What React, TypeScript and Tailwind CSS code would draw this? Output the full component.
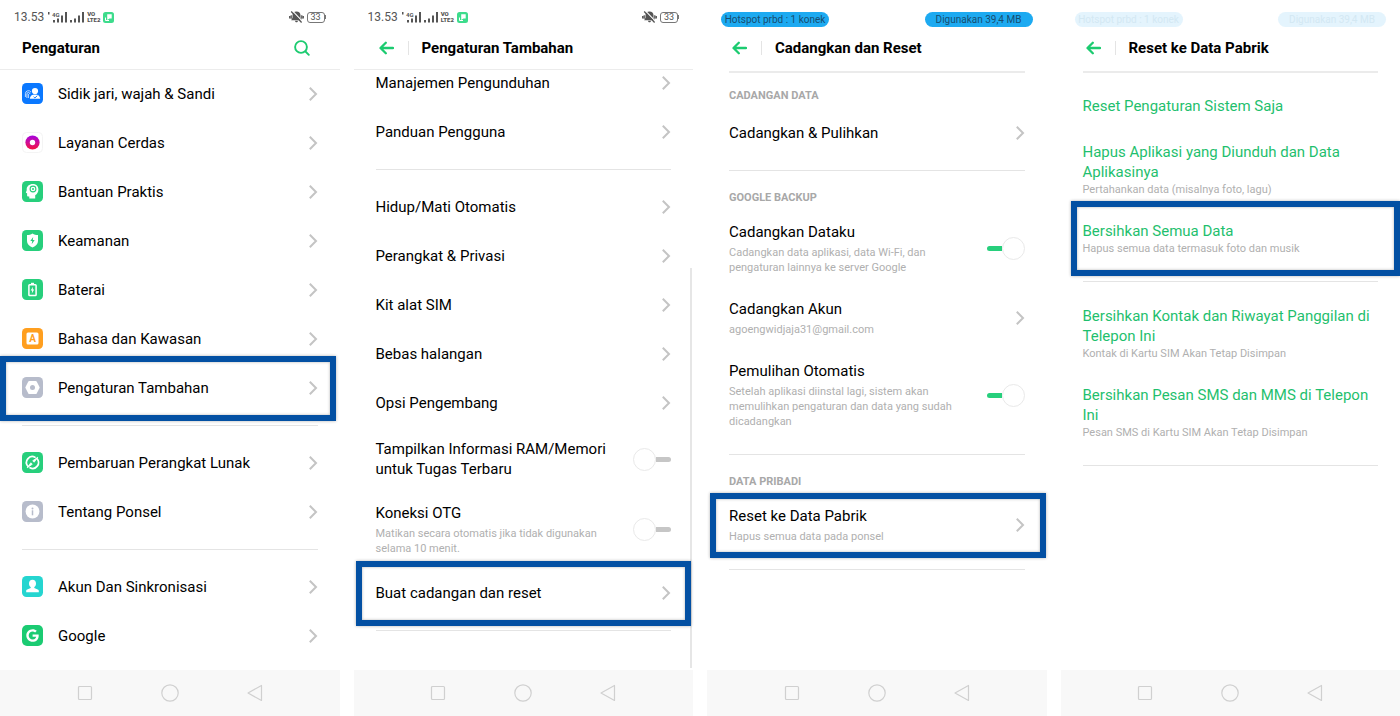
import { useId, useState, type ReactNode } from "react";
import { FaGoogle } from "react-icons/fa";

function Chevron() {
  return (
    <svg className="h-4 w-[9px] shrink-0" viewBox="0 0 9 16" fill="none" stroke="#c4c4c4" strokeWidth="2" aria-hidden="true">
      <path d="M.8 1.800 7 8 .8 14.200" />
    </svg>
  );
}

function BellOff() {
  return (
    <svg className="h-3 w-[15px]" viewBox="0 0 15 12" aria-hidden="true">
      <path d="M7.500.4C5 .4 3.500 2 3.500 4.300v2.400L2.200 9.200h10.600l-1.300-2.500V4.300c0-2.300-1.500-3.900-4-3.900Z" fill="#555" />
      <path d="M6 9.800h3c-.2 1-.8 1.500-1.500 1.500S6.200 10.800 6 9.800Z" fill="#555" />
      <path d="M3.600 0 14 10.800" stroke="#fff" strokeWidth="1.100" />
      <path d="M2.200.5 12.600 11.500M.7 5v2.400M14.300 5v2.400M2.200 4.200v3.500M12.800 4.200v3.500" stroke="#555" strokeWidth="1.300" />
    </svg>
  );
}

function Signal() {
  return (
    <svg className="h-3 w-[14px]" viewBox="0 0 14 12" fill="#555" aria-hidden="true">
      <path d="M0 9h2v2.500H0zM4 7.500h2v4H4zM8 4.500h2v7H8zM12 1h2v10.500h-2z" />
    </svg>
  );
}

function SignalLte() {
  return (
    <svg className="h-3 w-[19px]" viewBox="0 0 19 12" fill="#555" aria-hidden="true">
      <path d="M0 1h1.500v2.600H0zM5 9h2v2.500H5zM9 7.500h2v4H9zM13 4.500h2v7h-2zM17 1h2v10.500h-2z" />
      <text x="4" y="5.500" fontSize="6" fontWeight="700" fontFamily="Roboto, sans-serif">4G</text>
    </svg>
  );
}

function ClockStatus() {
  return (
    <div className="flex h-[34px] items-center px-3.5 text-[#555]">
      <span className="text-[12px] leading-4">13.53</span>
      <span className="ml-1 flex items-center gap-[3px]">
        <SignalLte />
        <Signal />
        <span className="flex flex-col text-[6px] font-black leading-[6px]">
          <span>VO</span>
          <span>LTE2</span>
        </span>
        <svg className="h-[11px] w-[11px]" viewBox="0 0 11 11" aria-hidden="true">
          <rect width="11" height="11" rx="2.500" fill="#3ddc8c" />
          <path d="M4.200 2.300h4.500v4.200H6.500L4.200 8Z" fill="#fff" />
          <path d="M2.500 5.500v3H6" stroke="#fff" strokeWidth="1" fill="none" />
        </svg>
      </span>
      <span className="ml-auto flex items-center gap-[3px]">
        <BellOff />
        <span className="flex items-center">
          <span className="flex h-[11px] w-[18px] items-center justify-center rounded-[3px] border border-[#777] text-[9px] leading-[9px]">33</span>
          <span className="h-1 w-px bg-[#777]" />
        </span>
      </span>
    </div>
  );
}

function PillStatus({ faded = false }: { faded?: boolean }) {
  const pill = faded ? "bg-[#e4f4fd] text-[#d3e8f3]" : "bg-[#1daaf1] text-[#174d70]";
  return (
    <div className="flex h-[34px] items-center justify-between px-3.5 pt-1 text-[10px] leading-[15px]">
      <span className={`w-[108px] whitespace-nowrap rounded-full text-center ${pill}`}>Hotspot prbd : 1 konek</span>
      <span className={`w-[108px] whitespace-nowrap rounded-full text-center ${pill}`}>Digunakan 39,4 MB</span>
    </div>
  );
}

function BackTitle({ children }: { children: ReactNode }) {
  return (
    <div className="flex h-7 items-center pl-[25px]">
      <button type="button" aria-label="Kembali">
        <svg className="h-[14px] w-[15px]" viewBox="0 0 15 14" fill="none" stroke="#1ccb70" strokeWidth="2.300" strokeLinecap="round" strokeLinejoin="round" aria-hidden="true">
          <path d="M14 7H2M6.800 1.800 1.500 7l5.300 5.200" />
        </svg>
      </button>
      <span className="ml-3.5 h-[14px] w-px bg-[#e4e4e4]" />
      <h1 className="ml-[13px] text-[15px] font-bold leading-5">{children}</h1>
    </div>
  );
}

function Divider() {
  return <hr className="mx-[22px] mb-3 mt-[13px] border-t border-[#e4e4e4]" />;
}

function Highlight({ place }: { place: string }) {
  return (
    <span
      className={`pointer-events-none absolute z-10 border-[6px] border-[#0350a3] shadow-[0_0_3px_rgba(0,0,0,0.3),inset_0_0_3px_rgba(0,0,0,0.3)] ${place}`}
    />
  );
}

function NavBar() {
  return (
    <nav className="flex h-[46px] items-center justify-center gap-[67px] bg-[#f8f8f8]">
      <button type="button" aria-label="Aplikasi terbaru">
        <svg className="h-[18px] w-[18px]" viewBox="0 0 18 18" fill="none" stroke="#d0d0d0" strokeWidth="1.200">
          <rect x="2.500" y="2.500" width="13" height="13" rx="1" />
        </svg>
      </button>
      <button type="button" aria-label="Beranda">
        <svg className="h-[18px] w-[18px]" viewBox="0 0 18 18" fill="none" stroke="#d0d0d0" strokeWidth="1.200">
          <circle cx="9" cy="9" r="8.200" />
        </svg>
      </button>
      <button type="button" aria-label="Kembali ke layar sebelumnya">
        <svg className="h-[18px] w-[18px]" viewBox="0 0 18 18" fill="none" stroke="#d0d0d0" strokeWidth="1.200" strokeLinejoin="round">
          <path d="M15.500 1.500v15L2 9Z" />
        </svg>
      </button>
    </nav>
  );
}

function Phone({ header, children }: { header: ReactNode; children: ReactNode }) {
  return (
    <section className="flex min-w-0 flex-col bg-white">
      {header}
      <div className="relative flex-1">{children}</div>
      <NavBar />
    </section>
  );
}

interface RowProps {
  title: string;
  note?: string;
  icon?: ReactNode;
  highlight?: string;
}

function LinkRow({ title, note, icon, highlight }: RowProps) {
  return (
    <li className="relative">
      <button type="button" className="flex min-h-[49px] w-full items-center px-[22px] py-3 text-left">
        {icon && <span className="mr-[15px] flex h-[21px] w-[21px] shrink-0">{icon}</span>}
        <span className="flex-1 pr-8">
          <span className="block text-[15px] leading-5">{title}</span>
          {note && <span className="mt-[3px] block text-[11px] leading-[15px] text-[#b0b0b0]">{note}</span>}
        </span>
        <Chevron />
      </button>
      {highlight && <Highlight place={highlight} />}
    </li>
  );
}

function SwitchRow({ title, note, initial = false }: { title: string; note?: string; initial?: boolean }) {
  const id = useId();
  const [on, setOn] = useState(initial);
  const track = <span className={`h-[5px] w-[15px] ${on ? "rounded-l-full bg-[#27cf7c]" : "rounded-r-full bg-[#c6c6c6]"}`} />;
  return (
    <li className="flex items-center px-[22px] py-3">
      <label htmlFor={id} className="w-[236px] flex-initial">
        <span className="block text-[15px] leading-5">{title}</span>
        {note && <span className="mt-[3px] block text-[11px] leading-[15px] text-[#b0b0b0]">{note}</span>}
      </label>
      <span className="relative ml-auto flex shrink-0 items-center">
        <input id={id} type="checkbox" role="switch" checked={on} onChange={() => setOn(!on)} className="absolute inset-0 m-0 h-full w-full opacity-0" />
        {on && track}
        <span className="h-[23px] w-[23px] rounded-full border border-[#e9e9e9] bg-white" />
        {!on && track}
      </span>
    </li>
  );
}

function ResetRow({ title, note, highlight }: RowProps) {
  return (
    <li className="relative">
      <button type="button" className="flex min-h-[49px] w-full flex-col justify-center px-[22px] py-3 text-left">
        <span className="text-[15px] leading-5 text-[#1fbf6e]">{title}</span>
        {note && <span className="text-[11px] leading-[15px] text-[#b0b0b0]">{note}</span>}
      </button>
      {highlight && <Highlight place={highlight} />}
    </li>
  );
}

function SectionTitle({ children, first = false }: { children: ReactNode; first?: boolean }) {
  return (
    <h2 className={`mb-1 px-[22px] text-[11px] font-bold leading-4 text-[#a8a8a8] ${first ? "pt-[15px]" : "pt-[7px]"}`}>{children}</h2>
  );
}

function Tile({ color, children }: { color: string; children: ReactNode }) {
  return (
    <svg className="h-[21px] w-[21px]" viewBox="0 0 21 21" aria-hidden="true">
      <rect width="21" height="21" rx="4.500" fill={color} />
      {children}
    </svg>
  );
}

const fingerprintFace = (
  <Tile color="#0a78ff">
    <circle cx="13" cy="8" r="3.100" fill="#fff" />
    <path d="M7.800 15.800c.2-2.900 2-4.300 5.200-4.300s5 1.400 5.200 4.300Z" fill="#fff" />
    <path d="m11.600 13.800 1.300 1.200 2.300-2.300" stroke="#0a78ff" strokeWidth="1" fill="none" />
    <path d="M3.400 14V10.600a3 3 0 0 1 5.600-1.400M4.900 15v-4a1.500 1.500 0 0 1 3 0M6.400 11v4" stroke="#cfe4ff" strokeWidth=".9" fill="none" />
  </Tile>
);

const smartService = (
  <svg className="h-[21px] w-[21px]" viewBox="0 0 21 21" aria-hidden="true">
    <defs>
      <linearGradient id="ring" x1="0" y1="0" x2="0" y2="1">
        <stop offset="0" stopColor="#a400e0" />
        <stop offset=".55" stopColor="#d4108c" />
        <stop offset="1" stopColor="#f5123e" />
      </linearGradient>
    </defs>
    <rect x=".5" y=".5" width="20" height="20" rx="4" fill="#fff" stroke="#f4f4f4" />
    <circle cx="10.500" cy="10.500" r="7.100" fill="url(#ring)" />
    <circle cx="10.500" cy="10.500" r="2.700" fill="#fff" />
  </svg>
);

const headTips = (
  <Tile color="#27cf7c">
    <path d="M11 3.100c-4 0-6.300 2.500-6.300 5.400 0 1-.1 1.600-.7 2.500-.3.500-.2.800.3 1l.8.300v1.900c0 1 .5 1.300 1.300 1.300h.9v2h5.900v-3.200c2-1.200 3.200-3.200 3.200-5.700 0-3.300-2.300-5.500-5.400-5.500Z" fill="#fff" />
    <circle cx="11" cy="8" r="2.900" fill="none" stroke="#27cf7c" strokeWidth="1.100" />
    <circle cx="11" cy="8" r="1" fill="#27cf7c" />
  </Tile>
);

const shield = (
  <Tile color="#27cf7c">
    <path d="M10.500 3.400c1.600 1 3.500 1.600 5.500 1.700v6c0 3-2 5-5.500 6.500C7 16.100 5 14.100 5 11.100v-6c2-.1 3.900-.7 5.500-1.700Z" fill="#fff" />
    <path d="M11.200 7 8.300 11h1.900l-.5 3.200 3-4.100h-1.900Z" fill="#27cf7c" />
  </Tile>
);

const battery = (
  <Tile color="#27cf7c">
    <path d="M9 3.800h3v1.400H9z" fill="#fff" />
    <rect x="6.900" y="5.700" width="7.200" height="10.800" rx=".8" fill="none" stroke="#fff" strokeWidth="1.500" />
    <path d="M11 7.700 8.700 11.400h1.500l-.4 3 2.400-3.800h-1.500Z" fill="#fff" />
  </Tile>
);

const language = (
  <Tile color="#ff9f1f">
    <rect x="4.500" y="4.500" width="12" height="12" rx="1.500" fill="#fff" />
    <text x="10.500" y="14" textAnchor="middle" fontSize="10" fontWeight="700" fontFamily="Roboto, sans-serif" fill="#ff9f1f">A</text>
  </Tile>
);

const extraSettings = (
  <Tile color="#b7bccb">
    <path d="M7.300 4h6.400a1.200 1.200 0 0 1 1 .6l2.800 5.300a1.200 1.200 0 0 1 0 1.200l-2.800 5.300a1.200 1.200 0 0 1-1 .6H7.300a1.200 1.200 0 0 1-1-.6l-2.800-5.300a1.200 1.200 0 0 1 0-1.200l2.800-5.300a1.200 1.200 0 0 1 1-.6Z" fill="#fff" />
    <circle cx="10.500" cy="10.500" r="2.500" fill="#b7bccb" />
  </Tile>
);

const update = (
  <Tile color="#27cf7c">
    <path d="M5.900 14.300A5.900 5.900 0 0 1 13 5.200M15.100 6.700A5.900 5.900 0 0 1 8 15.800" fill="none" stroke="#fff" strokeWidth="1.700" strokeLinecap="round" />
    <path d="m5.200 15.800 3.600-5 1.500 1.400ZM15.800 5.200l-3.600 5-1.500-1.400Z" fill="#fff" stroke="#fff" strokeWidth=".8" strokeLinejoin="round" />
  </Tile>
);

const about = (
  <Tile color="#b7bccb">
    <circle cx="10.500" cy="10.500" r="6.900" fill="#fff" />
    <circle cx="10.500" cy="7.400" r="1" fill="#b7bccb" />
    <path d="M10.500 9.300v5" stroke="#b7bccb" strokeWidth="1.500" />
  </Tile>
);

const account = (
  <Tile color="#25d5d0">
    <path d="M10.500 3.800c2.200 0 3.500 1.500 3.500 3.600 0 1.600-.7 2.900-1.700 3.700v1l3.400 1.300c.8.300 1.100.8 1.100 1.600v1.200H4.200V15c0-.8.300-1.300 1.100-1.600l3.400-1.300v-1C7.700 10.300 7 9 7 7.400c0-2.100 1.300-3.600 3.500-3.600Z" fill="#fff" />
  </Tile>
);

const google = (
  <span className="flex h-[21px] w-[21px] items-center justify-center rounded-[5px] bg-[#1bcb72] text-[13px] text-white">
    <FaGoogle aria-hidden="true" />
  </span>
);

export default function App() {
  return (
    <main className="grid min-h-screen grid-cols-4 gap-x-3.5 bg-white font-['Roboto',sans-serif] text-black">
      <Phone
        header={
          <header className="h-[70px] border-b border-[#ececec]">
            <ClockStatus />
            <div className="flex h-7 items-center justify-between pl-[22px] pr-[30px]">
              <h1 className="text-[15px] font-bold leading-5">Pengaturan</h1>
              <button type="button" aria-label="Cari">
                <svg className="h-4 w-4" viewBox="0 0 16 16" fill="none" stroke="#1ccb70" strokeWidth="1.900" strokeLinecap="round" aria-hidden="true">
                  <circle cx="7" cy="7" r="5.900" />
                  <path d="m11.500 11.500 3.300 3.300" />
                </svg>
              </button>
            </div>
          </header>
        }
      >
        <div className="-mt-px">
          <ul>
            <LinkRow icon={fingerprintFace} title="Sidik jari, wajah & Sandi" />
            <LinkRow icon={smartService} title="Layanan Cerdas" />
            <LinkRow icon={headTips} title="Bantuan Praktis" />
            <LinkRow icon={shield} title="Keamanan" />
            <LinkRow icon={battery} title="Baterai" />
            <LinkRow icon={language} title="Bahasa dan Kawasan" />
            <LinkRow icon={extraSettings} title="Pengaturan Tambahan" highlight="left-0 right-1 -top-[7px] -bottom-[9px]" />
          </ul>
          <Divider />
          <ul>
            <LinkRow icon={update} title="Pembaruan Perangkat Lunak" />
            <LinkRow icon={about} title="Tentang Ponsel" />
          </ul>
          <Divider />
          <ul>
            <LinkRow icon={account} title="Akun Dan Sinkronisasi" />
            <LinkRow icon={google} title="Google" />
          </ul>
        </div>
      </Phone>

      <Phone
        header={
          <header className="relative z-10 h-[70px] border-b border-[#ececec] bg-white">
            <ClockStatus />
            <BackTitle>Pengaturan Tambahan</BackTitle>
          </header>
        }
      >
        <div className="-mt-3">
          <ul>
            <LinkRow title="Manajemen Pengunduhan" />
            <LinkRow title="Panduan Pengguna" />
          </ul>
          <Divider />
          <ul>
            <LinkRow title="Hidup/Mati Otomatis" />
            <LinkRow title="Perangkat & Privasi" />
            <LinkRow title="Kit alat SIM" />
            <LinkRow title="Bebas halangan" />
            <LinkRow title="Opsi Pengembang" />
            <SwitchRow title="Tampilkan Informasi RAM/Memori untuk Tugas Terbaru" />
            <SwitchRow title="Koneksi OTG" note="Matikan secara otomatis jika tidak digunakan selama 10 menit." />
            <LinkRow title="Buat cadangan dan reset" highlight="left-0.5 right-0.5 -top-[7px] -bottom-[9px]" />
          </ul>
          <Divider />
        </div>
        <span className="absolute bottom-0.5 right-px top-[198px] w-0.5 bg-[#e6e6e6]" />
      </Phone>

      <Phone
        header={
          <header>
            <PillStatus />
            <BackTitle>Cadangkan dan Reset</BackTitle>
            <div className="mx-[22px] mt-[9px] h-0.5 bg-[#ebebeb]" />
          </header>
        }
      >
        <SectionTitle first>CADANGAN DATA</SectionTitle>
        <ul>
          <LinkRow title="Cadangkan & Pulihkan" />
        </ul>
        <Divider />
        <SectionTitle>GOOGLE BACKUP</SectionTitle>
        <ul>
          <SwitchRow initial title="Cadangkan Dataku" note="Cadangkan data aplikasi, data Wi-Fi, dan pengaturan lainnya ke server Google" />
          <LinkRow title="Cadangkan Akun" note="agoengwidjaja31@gmail.com" />
          <SwitchRow initial title="Pemulihan Otomatis" note="Setelah aplikasi diinstal lagi, sistem akan memulihkan pengaturan dan data yang sudah dicadangkan" />
        </ul>
        <Divider />
        <SectionTitle>DATA PRIBADI</SectionTitle>
        <ul>
          <LinkRow title="Reset ke Data Pabrik" note="Hapus semua data pada ponsel" highlight="left-[3px] right-px -top-px -bottom-0.5" />
        </ul>
        <Divider />
      </Phone>

      <Phone
        header={
          <header>
            <PillStatus faded />
            <BackTitle>Reset ke Data Pabrik</BackTitle>
            <div className="mx-[22px] mt-[9px] h-0.5 bg-[#ebebeb]" />
          </header>
        }
      >
        <ul className="pt-2">
          <ResetRow title="Reset Pengaturan Sistem Saja" />
          <ResetRow title="Hapus Aplikasi yang Diunduh dan Data Aplikasinya" note="Pertahankan data (misalnya foto, lagu)" />
          <ResetRow title="Bersihkan Semua Data" note="Hapus semua data termasuk foto dan musik" highlight="left-2.5 right-0 -top-2 -bottom-2" />
        </ul>
        <Divider />
        <ul>
          <ResetRow title="Bersihkan Kontak dan Riwayat Panggilan di Telepon Ini" note="Kontak di Kartu SIM Akan Tetap Disimpan" />
          <ResetRow title="Bersihkan Pesan SMS dan MMS di Telepon Ini" note="Pesan SMS di Kartu SIM Akan Tetap Disimpan" />
        </ul>
        <Divider />
      </Phone>
    </main>
  );
}
